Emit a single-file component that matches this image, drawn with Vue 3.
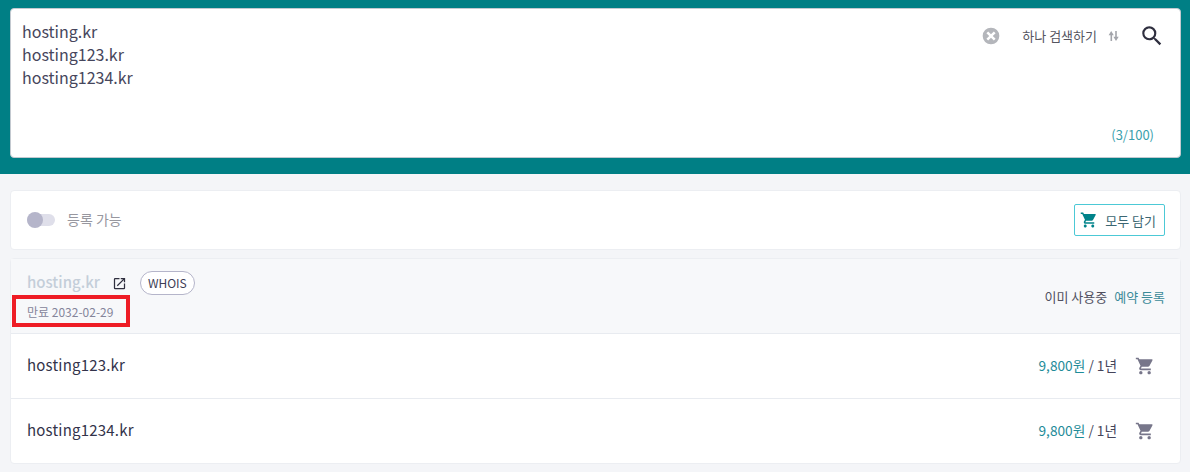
<script setup>
const domains = ['hosting.kr', 'hosting123.kr', 'hosting1234.kr']
const available = domains.slice(1)
</script>

<template>
  <div class="page">
    <header class="search-band">
      <div class="search-box">
        <div class="domains">
          <div v-for="d in domains" :key="d">{{ d }}</div>
        </div>
        <div class="search-actions">
          <svg class="clear-icon" viewBox="0 0 24 24" width="20" height="20">
            <path fill="#b4b6bb" d="M12 2a10 10 0 1 0 0 20 10 10 0 0 0 0-20zm5.500 13.400L15.400 17.500 12 14.100 8.600 17.500 6.500 15.400 9.900 12 6.500 8.600 8.600 6.500 12 9.900l3.400-3.400 2.100 2.100L14.100 12z" />
          </svg>
          <span class="mode">하나 검색하기</span>
          <svg class="swap-icon" viewBox="0 0 12 12" width="12" height="12">
            <path fill="#a3a5ab" d="M3.200 1l2.600 4.200H4.100V11H2.500V5.200H.6zM7.200 1h1.600v5.800h1.900L8 11 5.400 6.800h1.800z" />
          </svg>
          <svg class="search-icon" viewBox="0 0 24 24" width="26" height="26">
            <path fill="#2f2f3f" d="M15.500 14h-.79l-.28-.27A6.470 6.470 0 0 0 16 9.500 6.500 6.500 0 1 0 9.500 16c1.610 0 3.090-.59 4.230-1.570l.27.28v.79l5 4.990L20.490 19l-4.990-5zm-6 0C7.010 14 5 11.990 5 9.500S7.010 5 9.500 5 14 7.010 14 9.500 11.990 14 9.500 14z" />
          </svg>
        </div>
        <div class="count">(3/100)</div>
      </div>
    </header>

    <main class="content">
      <section class="toolbar">
        <div class="toggle-wrap">
          <span class="toggle"><span class="knob"></span></span>
          <span class="toggle-label">등록 가능</span>
        </div>
        <button class="add-all">
          <svg viewBox="0 0 24 24" width="18" height="18">
            <path fill="#00838a" d="M7 18c-1.100 0-1.990.9-1.990 2S5.900 22 7 22s2-.9 2-2-.9-2-2-2zM1 2v2h2l3.600 7.590-1.350 2.450c-.16.280-.25.610-.25.960 0 1.100.9 2 2 2h12v-2H7.420c-.14 0-.25-.11-.25-.25l.03-.12.900-1.630h7.450c.75 0 1.410-.41 1.750-1.030l3.580-6.490A1 1 0 0 0 20 4H5.210l-.94-2H1zm16 16c-1.100 0-1.990.9-1.990 2s.89 2 1.990 2 2-.9 2-2-.9-2-2-2z" />
          </svg>
          <span>모두 담기</span>
        </button>
      </section>

      <section class="results">
        <div class="row row-taken">
          <div class="taken-info">
            <div class="taken-top">
              <span class="taken-name">hosting.kr</span>
              <svg class="open-icon" viewBox="0 0 24 24" width="15" height="15">
                <path fill="#2f2f3f" d="M19 19H5V5h7V3H5a2 2 0 0 0-2 2v14a2 2 0 0 0 2 2h14a2 2 0 0 0 2-2v-7h-2v7zM14 3v2h3.590l-9.830 9.830 1.410 1.410L19 6.410V10h2V3h-7z" />
              </svg>
              <span class="whois">WHOIS</span>
            </div>
            <div class="expiry">만료 2032-02-29</div>
          </div>
          <div class="taken-status">
            <span class="in-use">이미 사용중</span>
            <span class="reserve">예약 등록</span>
          </div>
          <div class="highlight"></div>
        </div>
        <div v-for="d in available" :key="d" class="row">
          <span class="name">{{ d }}</span>
          <div class="buy">
            <span class="price"><em>9,800원</em> / 1년</span>
            <svg viewBox="0 0 24 24" width="20" height="20">
              <path fill="#77768a" d="M7 18c-1.100 0-1.990.9-1.990 2S5.900 22 7 22s2-.9 2-2-.9-2-2-2zM1 2v2h2l3.600 7.590-1.350 2.450c-.16.280-.25.610-.25.960 0 1.100.9 2 2 2h12v-2H7.420c-.14 0-.25-.11-.25-.25l.03-.12.900-1.630h7.450c.75 0 1.410-.41 1.750-1.030l3.580-6.490A1 1 0 0 0 20 4H5.210l-.94-2H1zm16 16c-1.100 0-1.990.9-1.990 2s.89 2 1.990 2 2-.9 2-2-.9-2-2-2z" />
            </svg>
          </div>
        </div>
      </section>
    </main>
  </div>
</template>

<style>
html,
body {
  margin: 0;
  background: #f4f5f8;
}
</style>

<style scoped>
.page {
  height: 472px;
  overflow: hidden;
  background: #f4f5f8;
  font-family: "Noto Sans CJK KR", "Noto Sans", sans-serif;
  color: #33334a;
}

.search-band {
  height: 174px;
  box-sizing: border-box;
  padding: 8px 9px 16px 10px;
  background: #007f85;
}

.search-box {
  position: relative;
  height: 150px;
  box-sizing: border-box;
  padding: 11px 11px;
  background: #fff;
  border-radius: 4px;
  border: 1px solid #c3c9d0;
}

.domains {
  font-size: 16px;
  line-height: 23px;
  color: #46465c;
}

.search-actions {
  position: absolute;
  top: 14px;
  right: 15px;
  display: flex;
  align-items: center;
  height: 26px;
}

.clear-icon {
  margin-right: 21px;
}

.mode {
  margin-top: -2px;
  font-size: 13px;
  color: #55555f;
}

.swap-icon {
  margin: 0 19px 0 11px;
}

.count {
  position: absolute;
  right: 26px;
  bottom: 12px;
  font-size: 13px;
  line-height: 20px;
  color: #3aa0ad;
}

.content {
  padding: 16px 9px 0 10px;
}

.toolbar {
  height: 60px;
  box-sizing: border-box;
  padding: 0 15px 0 16px;
  display: flex;
  align-items: center;
  justify-content: space-between;
  background: #fff;
  border: 1px solid #eceef2;
  border-radius: 4px;
}

.toggle-wrap {
  display: flex;
  align-items: center;
  gap: 12px;
}

.toggle {
  position: relative;
  display: block;
  width: 28px;
  height: 12px;
  border-radius: 6px;
  background: #dfdfea;
}

.knob {
  position: absolute;
  left: 0;
  top: -2px;
  width: 16px;
  height: 16px;
  border-radius: 50%;
  background: #b5b5ca;
}

.toggle-label {
  margin-top: -2px;
  font-size: 14px;
  color: #97979f;
}

.add-all {
  display: flex;
  align-items: center;
  gap: 7px;
  height: 32px;
  box-sizing: border-box;
  padding: 0 8px 0 5px;
  background: #fff;
  border: 1px solid #4cc9d6;
  border-radius: 2px;
  font: inherit;
  font-size: 13px;
  color: #3b6672;
}

.results {
  margin-top: 8px;
  background: #fff;
  border: 1px solid #eceef2;
  border-radius: 4px;
}

.row {
  position: relative;
  height: 65px;
  box-sizing: border-box;
  padding: 0 15px 0 16px;
  display: flex;
  align-items: center;
  justify-content: space-between;
  border-top: 1px solid #e8ebf0;
}

.row-taken {
  height: 74px;
  border-top: 0;
  align-items: flex-start;
  background: #f7f8fa;
}

.taken-top {
  display: flex;
  align-items: center;
  height: 24px;
  margin-top: 12px;
}

.taken-name {
  padding-bottom: 3px;
  font-size: 15px;
  font-weight: 500;
  color: #c4ced9;
}

.open-icon {
  margin: 0 13px 0 12px;
}

.whois {
  height: 24px;
  box-sizing: border-box;
  padding: 0 7px;
  line-height: 22px;
  font-size: 12px;
  color: #3d3d55;
  background: #fff;
  border: 1px solid #b5b5ca;
  border-radius: 12px;
}

.expiry {
  margin-top: 8px;
  font-size: 12px;
  line-height: 18px;
  color: #85859a;
}

.taken-status {
  align-self: flex-end;
  display: flex;
  gap: 7px;
  margin-bottom: 27px;
  font-size: 13px;
  line-height: 18px;
}

.in-use {
  color: #50505f;
}

.reserve {
  color: #3a8a98;
}

.highlight {
  position: absolute;
  left: 1px;
  top: 36px;
  width: 118px;
  height: 32px;
  box-sizing: border-box;
  border: 4px solid #ee1c25;
}

.name {
  margin-top: -3px;
  font-size: 15px;
  letter-spacing: 0.2px;
  color: #33334a;
}

.buy {
  display: flex;
  align-items: center;
  gap: 18px;
  margin-right: 10px;
  font-size: 13.7px;
}

.price {
  margin-top: -3px;
  color: #45455a;
}

.price em {
  font-style: normal;
  color: #1f8c99;
}
</style>
